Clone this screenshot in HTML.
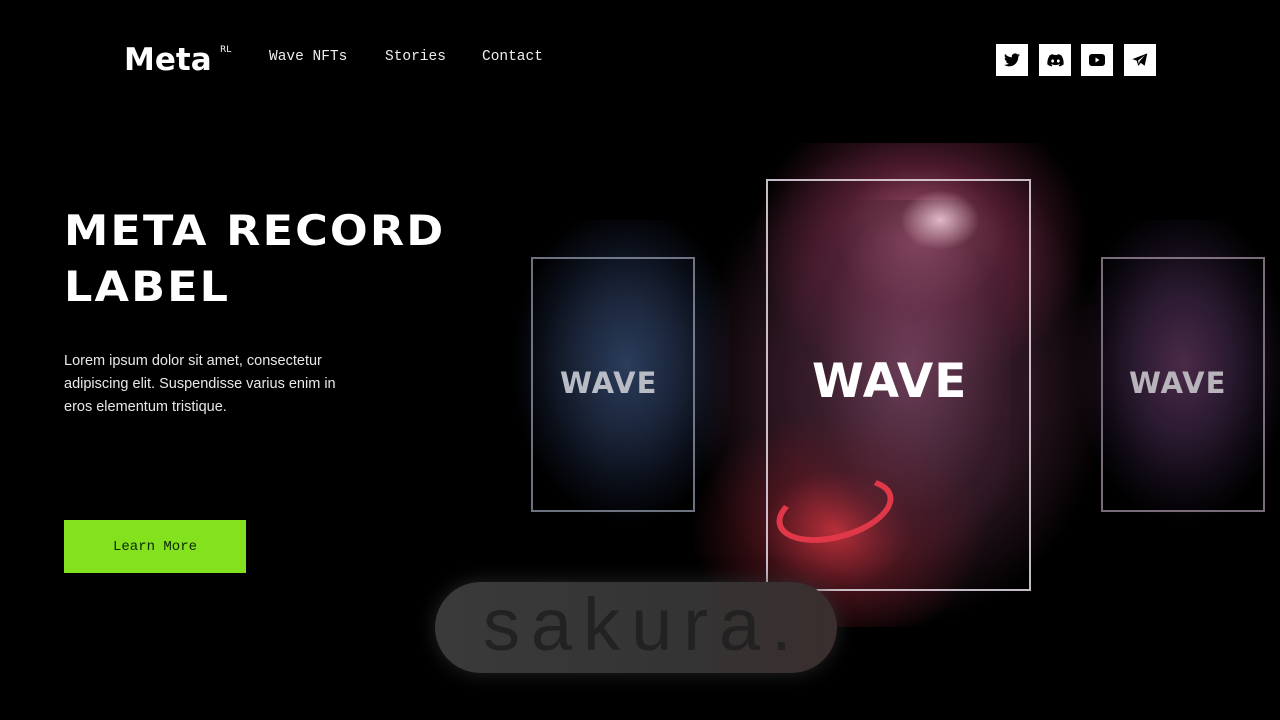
<!DOCTYPE html>
<html><head><style>
*{margin:0;padding:0;box-sizing:border-box}
body{width:1280px;height:720px;background:#000;overflow:hidden;position:relative;font-family:"Liberation Sans",sans-serif;color:#fff}
.abs{position:absolute}
.logo{left:124px;top:40px;font-family:"DejaVu Sans",sans-serif;font-size:31px;font-weight:bold;line-height:40px}
.logo sup{font-size:9px;position:absolute;left:96px;top:4px;line-height:12px;font-weight:normal}
.nav{top:49px;font-family:"Liberation Mono",monospace;font-size:14.5px;color:#eee}
.soc{top:44px;width:32px;height:32px;background:#fff;display:flex;align-items:center;justify-content:center}
h1{position:absolute;left:64px;top:203px;font-family:"DejaVu Sans",sans-serif;font-weight:bold;font-size:42px;line-height:56px;letter-spacing:2px;transform:scaleX(1.06);transform-origin:left}
.p{left:64px;top:350px;width:300px;font-size:14.5px;line-height:23px;color:#e8e8e8}
.btn{left:64px;top:520px;width:182px;height:53px;background:#84e11d;color:#0a2a00;font-family:"Liberation Mono",monospace;font-size:14px;display:flex;align-items:center;justify-content:center}
.frame{border:2px solid rgba(230,220,230,.85)}
.wave{font-family:"DejaVu Sans",sans-serif;font-weight:bold;letter-spacing:1px}
.pill{left:435px;top:582px;width:402px;height:91px;border-radius:46px;background:linear-gradient(90deg,#3a3a3a,#343434 60%,#3a2e2e);box-shadow:0 0 20px rgba(60,60,60,.6)}
.pill span{position:absolute;left:48px;top:0;font-size:74px;line-height:86px;color:#222;letter-spacing:11px}
</style></head><body>
<div class="abs logo">Meta<sup>RL</sup></div>
<div class="abs nav" style="left:269px">Wave NFTs</div>
<div class="abs nav" style="left:385px">Stories</div>
<div class="abs nav" style="left:482px">Contact</div>
<div class="abs soc" style="left:996px"><svg width="16" height="14" viewBox="0 0 24 20"><path d="M24 2.4a10 10 0 0 1-2.8.8A5 5 0 0 0 23.3.5a10 10 0 0 1-3.1 1.2A4.9 4.9 0 0 0 11.8 6 14 14 0 0 1 1.7.9a4.9 4.9 0 0 0 1.5 6.6A4.9 4.9 0 0 1 1 6.9a4.9 4.9 0 0 0 3.9 4.9 5 5 0 0 1-2.2.1 4.9 4.9 0 0 0 4.6 3.4A9.9 9.9 0 0 1 0 17.3 14 14 0 0 0 7.5 19.5c9.1 0 14-7.5 14-14v-.6A10 10 0 0 0 24 2.4z" fill="#000"/></svg></div>
<div class="abs soc" style="left:1039px"><svg width="17" height="13" viewBox="0 0 24 18"><path d="M20 1.5A19 19 0 0 0 15.3 0l-.6 1.2a18 18 0 0 0-5.4 0L8.7 0A19 19 0 0 0 4 1.5C1 6 .2 10.3.6 14.6A19 19 0 0 0 6.4 17.5l1.2-2a12 12 0 0 1-1.9-.9l.5-.4a13.6 13.6 0 0 0 11.6 0l.5.4a12 12 0 0 1-1.9.9l1.2 2a19 19 0 0 0 5.8-2.9C23.9 9.6 22.7 5.3 20 1.5zM8 12c-1.1 0-2-1-2-2.3S6.9 7.4 8 7.4s2 1 2 2.3S9.1 12 8 12zm8 0c-1.1 0-2-1-2-2.3s.9-2.3 2-2.3 2 1 2 2.3-.9 2.3-2 2.3z" fill="#000"/></svg></div>
<div class="abs soc" style="left:1081px"><svg width="16" height="12" viewBox="0 0 16 12"><rect width="16" height="12" rx="3" fill="#000"/><path d="M6.5 3.5v5l4-2.5z" fill="#fff"/></svg></div>
<div class="abs soc" style="left:1124px"><svg width="16" height="14" viewBox="0 0 24 20"><path d="M23 0 .5 8.7l6.5 2.3 2.5 8 3.7-4.6 5.8 4.3zM9 11l10-8-8 9.5-.5 4z" fill="#000"/></svg></div>

<h1>META RECORD<br>LABEL</h1>
<div class="abs p">Lorem ipsum dolor sit amet, consectetur adipiscing elit. Suspendisse varius enim in eros elementum tristique.</div>
<div class="abs btn">Learn More</div>

<!-- left card -->
<div class="abs" style="left:500px;top:220px;width:230px;height:320px;background:radial-gradient(ellipse 50% 50% at 55% 45%,#2a3d5c 0%,#1a2438 45%,#0a0e18 75%,rgba(0,0,0,0) 100%)"></div>
<div class="abs frame" style="left:531px;top:257px;width:164px;height:255px;border-color:rgba(180,190,210,.6)"></div>
<div class="abs wave" style="left:560px;top:366px;font-size:29px;color:#b9bcc4">WAVE</div>

<!-- right card -->
<div class="abs" style="left:1075px;top:220px;width:215px;height:320px;background:radial-gradient(ellipse 50% 50% at 50% 45%,#4a2a48 0%,#2a1a30 45%,#100a14 75%,rgba(0,0,0,0) 100%)"></div>
<div class="abs frame" style="left:1101px;top:257px;width:164px;height:255px;border-color:rgba(200,180,200,.6)"></div>
<div class="abs wave" style="left:1129px;top:366px;font-size:29px;color:#b9b4bc">WAVE</div>

<!-- center card -->
<div class="abs" style="left:690px;top:143px;width:420px;height:484px;background:radial-gradient(ellipse 40% 30% at 55% 20%,rgba(190,100,130,.9) 0%,rgba(120,40,70,.6) 50%,transparent 100%),radial-gradient(ellipse 35% 25% at 35% 80%,rgba(200,50,60,.9) 0%,rgba(100,25,35,.6) 50%,transparent 100%),radial-gradient(ellipse 50% 50% at 50% 50%,#4a2838 0%,#2a1520 60%,rgba(0,0,0,0) 100%)"></div>
<div class="abs" style="left:790px;top:200px;width:220px;height:360px;background:radial-gradient(ellipse at 55% 45%,rgba(120,70,100,.7),rgba(60,30,45,.4) 55%,transparent 75%)"></div>
<div class="abs" style="left:900px;top:190px;width:80px;height:60px;border-radius:50%;background:radial-gradient(#e0b8c8,rgba(200,150,170,0) 70%)"></div>
<div class="abs" style="left:775px;top:480px;width:120px;height:60px;border-radius:50%;border:6px solid #e03848;border-top-color:transparent;transform:rotate(-15deg)"></div>
<div class="abs frame" style="left:766px;top:179px;width:265px;height:412px"></div>
<div class="abs wave" style="left:812px;top:354px;font-size:47px;color:#fff">WAVE</div>

<div class="abs pill"><span>sakura.</span></div>
</body></html>
